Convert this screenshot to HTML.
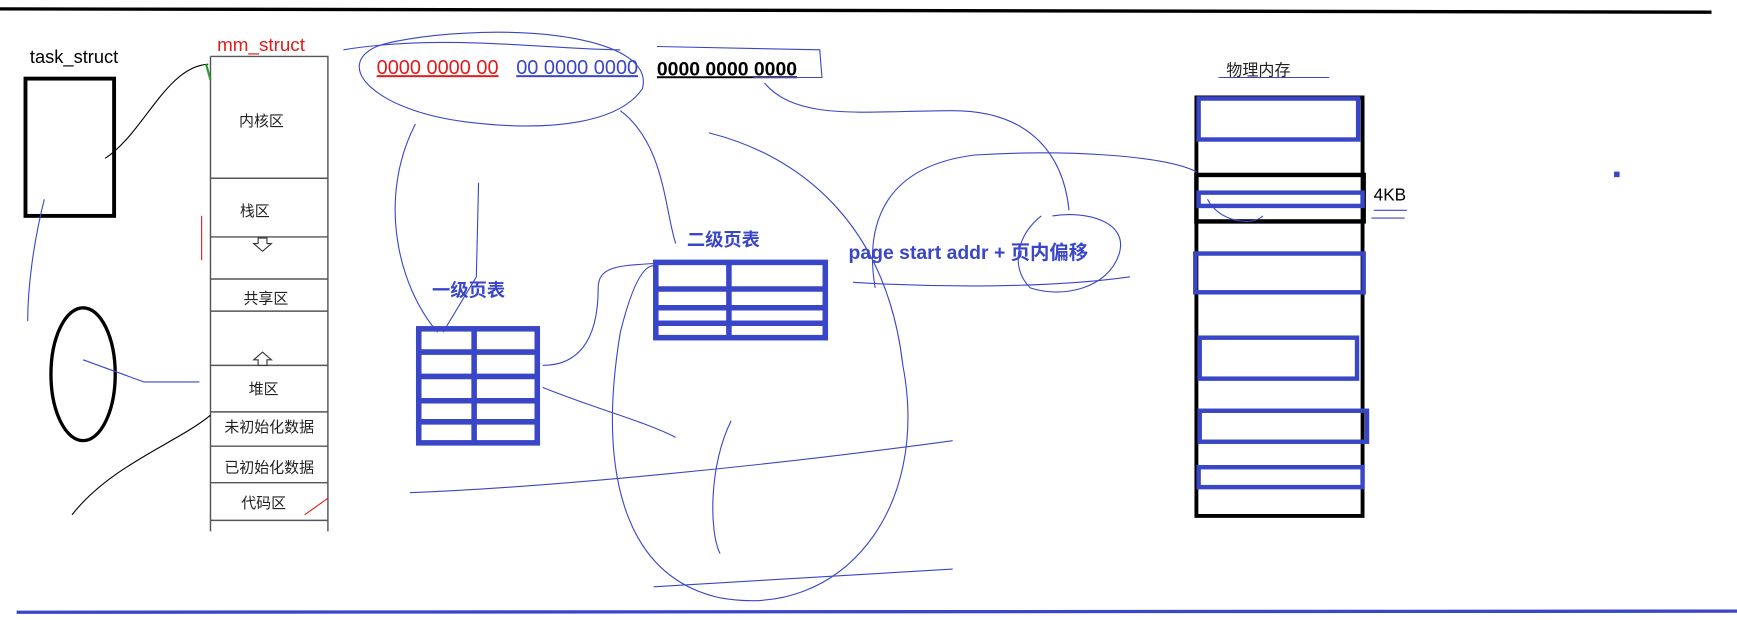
<!DOCTYPE html>
<html><head><meta charset="utf-8"><style>
html,body{margin:0;padding:0;background:#fff;width:1737px;height:620px;overflow:hidden}
svg{display:block}
text{font-family:"Liberation Sans","Noto Sans CJK SC",sans-serif}
</style></head><body>
<svg width="1737" height="620" viewBox="0 0 1568 560" preserveAspectRatio="none">
<rect width="1568" height="560" fill="#fff"/>
<path d="M0 8 L520 9 L1545 11" stroke="#000" stroke-width="3" fill="none"/>
<path d="M15 553 L1568 552" stroke="#3a46c8" stroke-width="3" fill="none"/>
<text x="27" y="57" font-size="16.5">task_struct</text>
<rect x="23" y="71" width="80" height="124" fill="none" stroke="#000" stroke-width="3.5"/>
<ellipse cx="75" cy="338" rx="29" ry="60" fill="none" stroke="#000" stroke-width="3"/>
<text x="196" y="46" font-size="17" fill="#e21b1b">mm_struct</text>
<g stroke="#555" stroke-width="1.3" fill="none">
<path d="M190 51 H296 V480 M190 51 V480"/>
<path d="M190 161H296 M190 214H296 M190 252H296 M190 281H296 M190 330H296 M190 372H296 M190 403H296 M190 436H296 M190 470H296"/>
</g>
<g font-size="13.5" text-anchor="middle" fill="#222">
<text x="236" y="114">内核区</text><text x="230" y="195">栈区</text><text x="240" y="274">共享区</text>
<text x="238" y="356">堆区</text><text x="243" y="390">未初始化数据</text><text x="243" y="427">已初始化数据</text><text x="238" y="459">代码区</text>
</g>
<path d="M233 215h8v5h4l-8 7-8-7h4z" fill="#fff" stroke="#333"/>
<path d="M233 330h8v-5h4l-8-7-8 7h4z" fill="#fff" stroke="#333"/>
<text x="340" y="67" font-size="18" fill="#e21b1b" text-decoration="underline">0000 0000 00</text>
<text x="466" y="67" font-size="18" fill="#3a46c8" text-decoration="underline">00 0000 0000</text>
<text x="593" y="68" font-size="17.5" font-weight="bold" fill="#000" text-decoration="underline">0000 0000 0000</text>
<text x="390" y="268" font-size="16.5" font-weight="bold" fill="#3a46c8" font-family="Noto Sans CJK SC">一级页表</text>
<g stroke="#3a46c8" stroke-width="5" fill="none">
<rect x="378" y="297" width="107" height="103"/>
<path d="M378 318H485 M376 340H485 M376 362H485 M378 381H485 M428 297V400"/>
<rect x="592" y="237" width="153" height="68"/>
<path d="M590 261H745 M590 278H745 M590 292H745 M658 237V305"/>
</g>
<text x="620" y="222" font-size="16.5" font-weight="bold" fill="#3a46c8" font-family="Noto Sans CJK SC">二级页表</text>
<text x="766" y="234" font-size="17.5" font-weight="bold" fill="#3a46c8">page start addr + 页内偏移</text>
<text x="1107" y="68" font-size="14.5" fill="#222">物理内存</text>
<rect x="1080" y="88" width="150" height="378" fill="none" stroke="#000" stroke-width="3.5"/>
<rect x="1080" y="158" width="151" height="42" fill="none" stroke="#000" stroke-width="4"/>
<g stroke="#3a46c8" stroke-width="4" fill="none">
<rect x="1082" y="89" width="144" height="37"/><rect x="1082" y="174" width="148" height="12"/>
<rect x="1079" y="229" width="152" height="35"/><rect x="1083" y="305" width="142" height="37"/>
<rect x="1083" y="371" width="151" height="28"/><rect x="1082" y="422" width="148" height="18"/>
</g>
<text x="1240" y="181" font-size="15.5" fill="#000">4KB</text>
<rect x="1457" y="155" width="5" height="5" fill="#3a46c8"/>
<g stroke="#3a46c8" stroke-width="1" fill="none">
<path d="M340 42 C300 60 340 100 420 110 C500 120 560 110 580 80 C590 40 500 25 420 30 C380 32 350 38 340 42"/>
<path d="M310 45 C400 30 500 45 560 45"/><path d="M593 42 L740 45 L742 70 L680 70"/>
<path d="M375 112 C340 180 360 260 395 300"/><path d="M432 165 L430 250 L400 300"/>
<path d="M560 100 C600 130 600 190 610 220"/><path d="M640 120 C720 140 800 200 815 330 C840 460 760 560 650 540 C560 520 540 420 560 300 C570 260 580 240 590 240"/>
<path d="M490 330 C520 330 540 310 540 260 C540 240 560 240 590 238"/>
<path d="M490 350 C540 370 580 380 610 395"/><path d="M370 445 C500 440 700 420 860 398"/>
<path d="M690 75 C720 110 780 100 860 100 C930 100 960 140 965 190"/>
<path d="M790 260 C780 200 800 150 880 140 C960 135 1050 140 1080 155"/>
<path d="M770 255 C850 260 950 260 1020 250"/><path d="M940 195 C920 210 910 240 930 260 C960 270 1000 260 1010 230 C1020 200 980 190 950 195"/>
<path d="M660 380 C640 420 640 480 650 500"/><path d="M590 530 L860 514"/>
<path d="M1090 180 C1100 200 1130 205 1140 195"/><path d="M1100 70 H1200"/>
<path d="M1240 190 H1270 M1238 197 H1268"/>
<path d="M40 180 C30 220 25 260 25 290"/><path d="M75 325 L130 345 L180 345"/>
</g>
<g stroke="#000" stroke-width="1" fill="none">
<path d="M95 143 C130 120 150 60 188 58"/><path d="M65 465 C100 420 160 400 190 375"/>
</g>
<path d="M186 58 L190 72" stroke="#2a9a3a" stroke-width="2"/>
<path d="M182 195 L182 235 M275 465 L296 450" stroke="#e21b1b" stroke-width="1"/>
</svg>
</body></html>
